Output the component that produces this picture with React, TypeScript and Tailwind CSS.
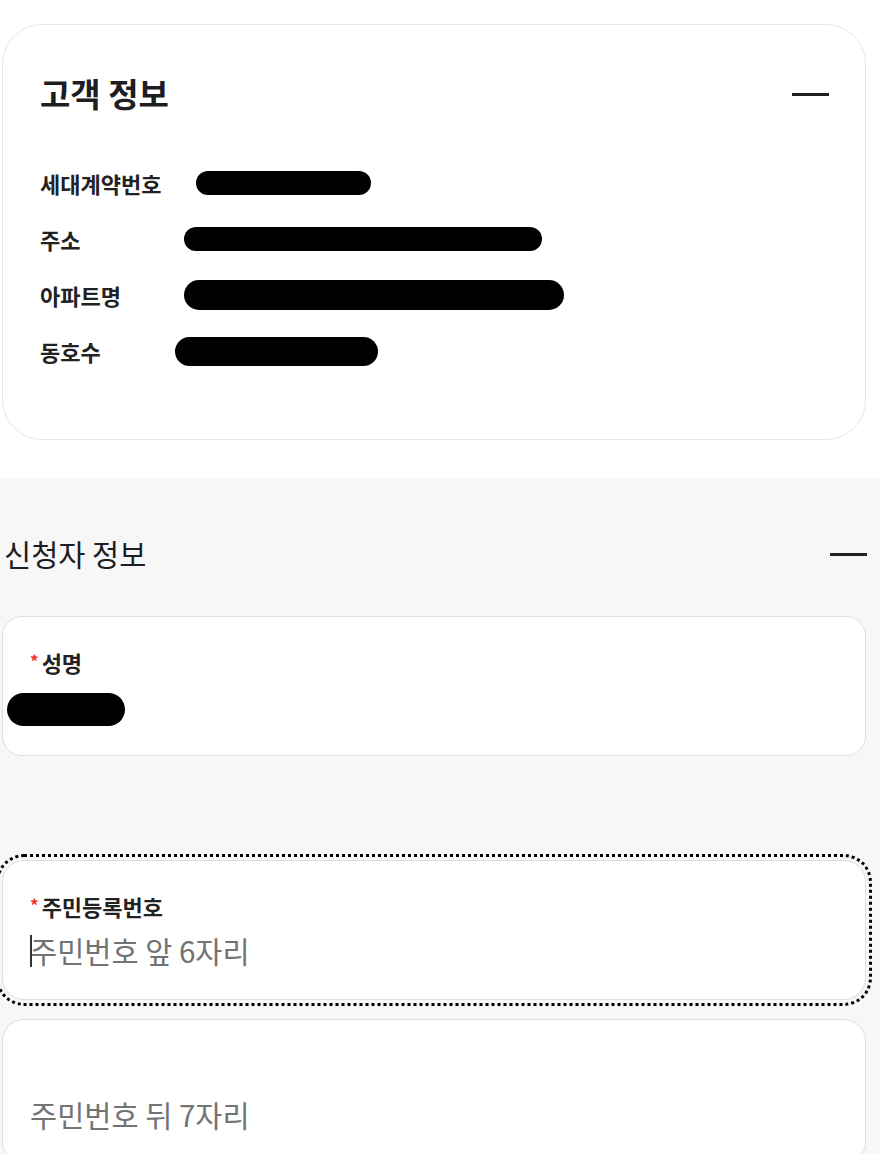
const FONT = "font-['Noto_Sans_CJK_KR','Noto_Sans',sans-serif]";

const customerRows = [
  { label: "세대계약번호", bar: "ml-[13px] w-[175px] h-[24px]" },
  { label: "주소", bar: "ml-[1px] w-[358px] h-[24px]" },
  { label: "아파트명", bar: "ml-[1px] w-[380px] h-[30px]" },
  { label: "동호수", bar: "-ml-[8px] w-[203px] h-[29px]" },
];

function Minus() {
  return <span className="block h-[3px] w-[37px] bg-[#1f1f25]" />;
}

function RequiredLabel({ text }: { text: string }) {
  return (
    <div className="flex h-[28px] items-center pl-[27px] text-[22px] font-bold leading-[28px] text-[#222]">
      <span className="mr-[3px] -mt-[2px] text-[17px] text-[#f0332a]">*</span>
      {text}
    </div>
  );
}

export default function App() {
  return (
    <div className={`min-h-[1154px] w-full overflow-hidden bg-white ${FONT}`}>
      <div className="pb-[38px] pl-[2px] pr-[14px] pt-[24px]">
        <section className="rounded-[40px] border border-[#e3e5eb] bg-white pb-[60px] pl-[37px] pr-[36px] pt-[49px]">
          <div className="flex h-[40px] items-center justify-between">
            <h2 className="-mt-[3px] text-[33px] font-bold leading-[40px] text-[#1d1d22]">고객 정보</h2>
            <Minus />
          </div>
          <div className="mt-[41px]">
            {customerRows.map((row) => (
              <div key={row.label} className="flex h-14 items-center">
                <span className="w-[143px] text-[22px] font-bold text-[#222]">{row.label}</span>
                <span className={`rounded-full bg-black ${row.bar}`} />
              </div>
            ))}
          </div>
        </section>
      </div>

      <div className="bg-[#f7f7f8] pb-[40px] pr-[14px] pt-[56px]">
        <div className="flex h-[40px] items-center justify-between pl-[4px]">
          <h2 className="-mt-[2px] text-[29.5px] font-normal leading-[40px] text-[#1d1d22]">신청자 정보</h2>
          <div className="-mr-[1px]">
            <Minus />
          </div>
        </div>

        <div className="ml-[2px] mt-[42px] rounded-[20px] border border-[#dcdde3] bg-white pb-[29px] pt-[31px]">
          <RequiredLabel text="성명" />
          <div className="ml-[4px] mt-[17px] h-[33px] w-[118px] rounded-full bg-black" />
        </div>

        <div className="ml-[2px] mt-[104px] rounded-[22px] border border-[#dcdde3] bg-white pb-[29px] pt-[31px] outline-[3px] outline-offset-[3px] outline-black outline-dotted">
          <RequiredLabel text="주민등록번호" />
          <div className="relative mt-[10px] pl-[27px]">
            <span className="absolute left-[27px] top-[5px] h-[32px] w-[1.5px] bg-[#333]" />
            <input
              readOnly
              placeholder="주민번호 앞 6자리"
              className="h-[40px] w-full bg-transparent text-[29.5px] leading-[40px] text-[#222] outline-none placeholder:text-[#737373]"
            />
          </div>
        </div>

        <div className="ml-[2px] mt-[19px] rounded-[22px] border border-[#dcdde3] bg-white pb-[29px] pt-[31px]">
          <div className="h-[28px]" />
          <div className="mt-[15px] pl-[27px]">
            <input
              readOnly
              placeholder="주민번호 뒤 7자리"
              className="h-[40px] w-full bg-transparent text-[29.5px] leading-[40px] text-[#222] outline-none placeholder:text-[#737373]"
            />
          </div>
        </div>
      </div>
    </div>
  );
}
